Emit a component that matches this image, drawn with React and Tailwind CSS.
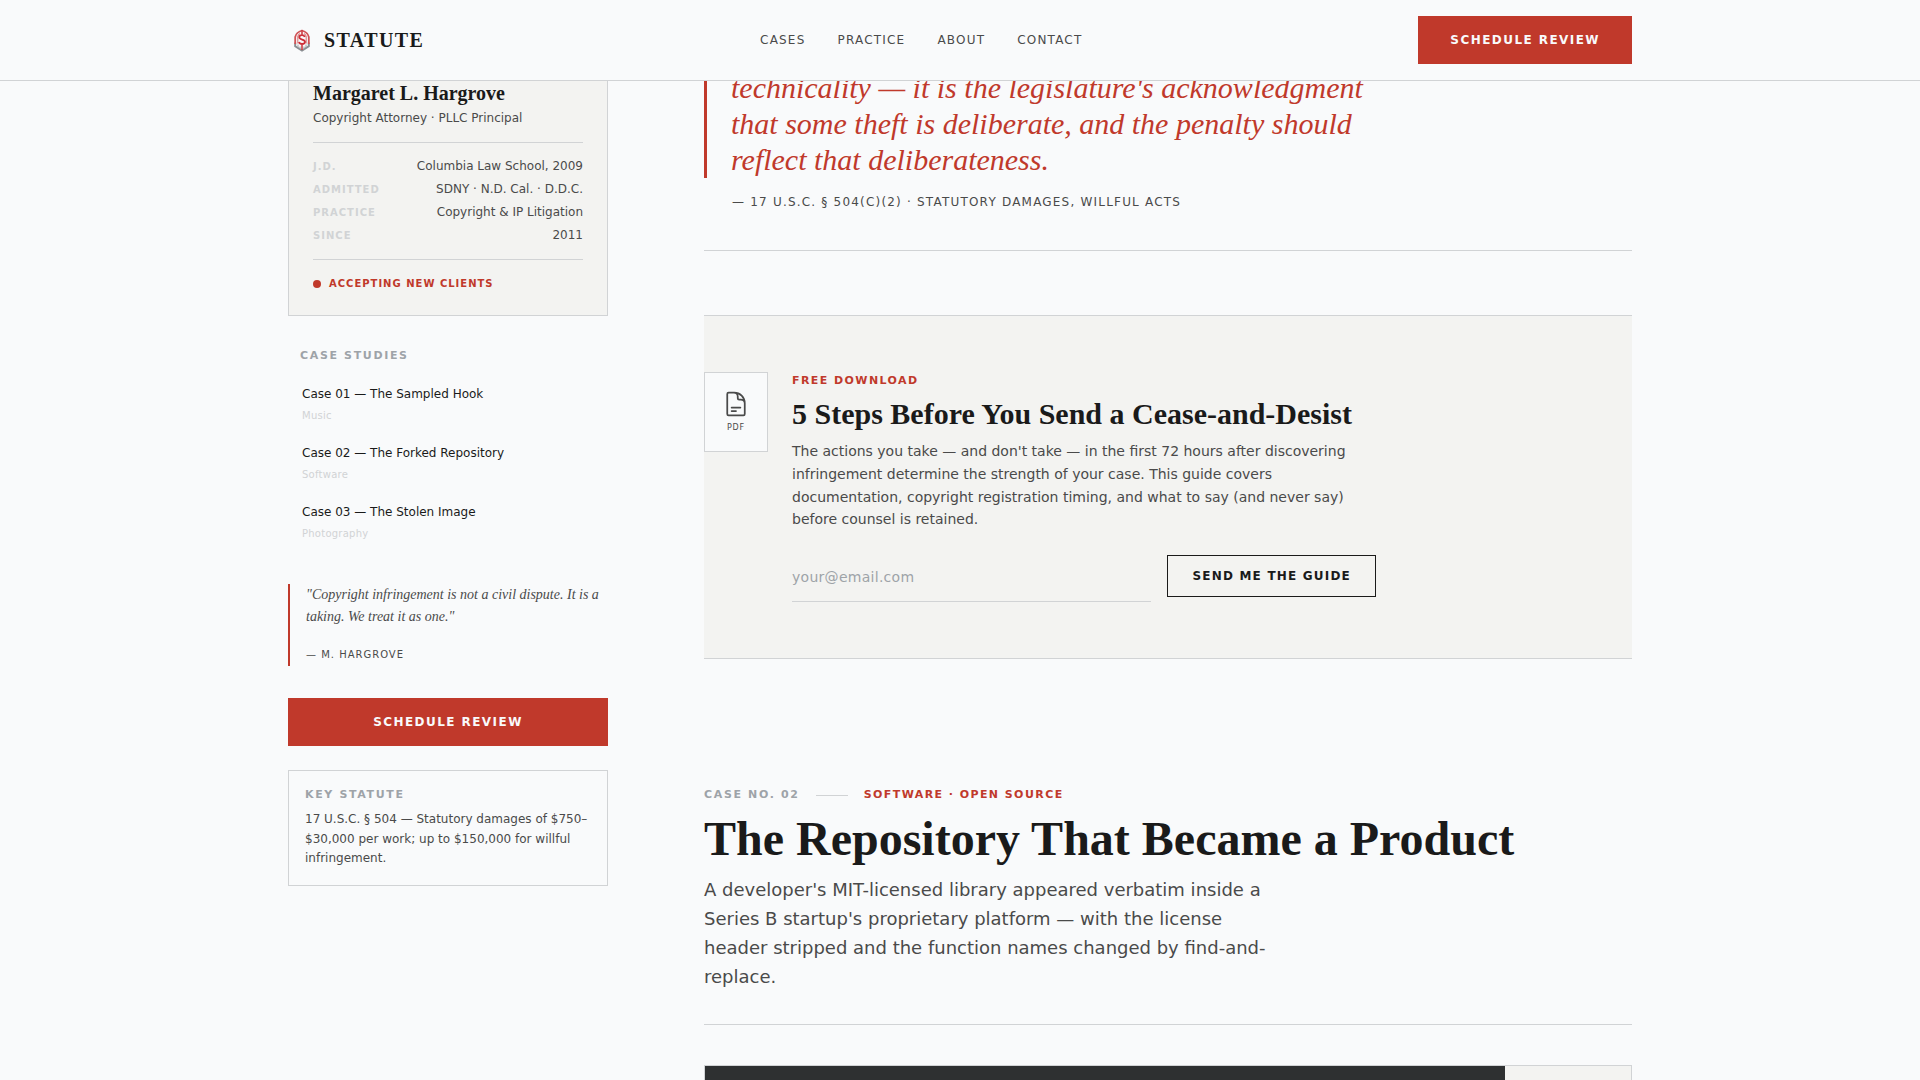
const credentials = [
  ['J.D.', 'Columbia Law School, 2009'],
  ['Admitted', 'SDNY · N.D. Cal. · D.D.C.'],
  ['Practice', 'Copyright & IP Litigation'],
  ['Since', '2011'],
];

const cases = [
  ['Case 01 — The Sampled Hook', 'Music'],
  ['Case 02 — The Forked Repository', 'Software'],
  ['Case 03 — The Stolen Image', 'Photography'],
];

const navLinks = ['Cases', 'Practice', 'About', 'Contact'];

function Logo() {
  return (
    <svg viewBox="0 0 28 28" className="size-7" fill="none" aria-hidden="true">
      <path d="M7.200 16.500v3.800l6.800 4.200 6.800-4.200v-3.800" stroke="#8a8d91" strokeWidth="2" />
      <path d="M10 18.500v3M18 18.500v3M12 20.500v3M16 20.500v3" stroke="#a2a4a7" strokeWidth="1" />
      <path d="M7.200 18v-7c.6-2.800 3-5.400 6.800-6.500 3.800 1.100 6.200 3.700 6.800 6.500v7" stroke="#d05356" strokeWidth="1.800" />
      <path d="M9.800 17.500v-7c.3-1.300 1-2.300 2.200-3M18.200 17.500v-7c-.3-1.300-1-2.300-2.200-3" stroke="#d98486" strokeWidth="1.200" />
      <path d="M16.800 11c-.5-1.300-1.500-1.900-2.800-1.900-1.600 0-2.700.8-2.700 2.100 0 2.900 5.700 1.800 5.700 4.600 0 1.400-1.200 2.200-2.900 2.200-1.500 0-2.700-.6-3.100-2" stroke="#cd2f38" strokeWidth="1.800" />
      <path d="M14 4v5.500M14 18v6" stroke="#cd3f46" strokeWidth="1.600" />
    </svg>
  );
}

function DocumentIcon() {
  return (
    <svg viewBox="0 0 24 24" className="size-7" fill="none" stroke="currentColor" strokeWidth="1.5" strokeLinecap="round" strokeLinejoin="round" aria-hidden="true">
      <path d="M19.5 14.25v-2.625a3.375 3.375 0 0 0-3.375-3.375h-1.5A1.125 1.125 0 0 1 13.5 7.125v-1.5a3.375 3.375 0 0 0-3.375-3.375H8.25m0 12.75h7.5m-7.5 3H12M10.5 2.25H5.625c-.621 0-1.125.504-1.125 1.125v17.25c0 .621.504 1.125 1.125 1.125h12.75c.621 0 1.125-.504 1.125-1.125V11.25a9 9 0 0 0-9-9Z" />
    </svg>
  );
}

function Header() {
  return (
    <header className="sticky top-0 z-10 border-b border-[#d1d3d5] bg-[#f9fafb]">
      <div className="mx-auto flex h-20 max-w-[1440px] items-center justify-between px-12">
        <a href="#top" className="flex items-center gap-2">
          <Logo />
          <span className="font-['Liberation_Serif',serif] text-xl font-bold tracking-[0.07em] text-[#1a1a1a]">STATUTE</span>
        </a>
        <nav aria-label="Primary" className="flex gap-8">
          {navLinks.map((label) => (
            <a key={label} href={`#${label.toLowerCase()}`} className="text-xs tracking-[0.1em] uppercase">
              {label}
            </a>
          ))}
        </nav>
        <button type="button" className="h-12 bg-[#c0392b] px-8 text-xs font-bold tracking-[0.12em] text-[#f9fafb] uppercase">
          Schedule Review
        </button>
      </div>
    </header>
  );
}

function Sidebar() {
  return (
    <aside className="w-80 shrink-0">
      <section className="border border-[#d1d3d5] bg-[#f3f3f1] px-6 pt-2 pb-6">
        <h2 className="font-['Liberation_Serif',serif] text-xl leading-7 font-bold text-[#1a1a1a]">Margaret L. Hargrove</h2>
        <p className="mt-px text-xs leading-5">Copyright Attorney · PLLC Principal</p>
        <dl className="mt-[14px] flex flex-col gap-1 border-y border-[#d1d3d5] py-[14px]">
          {credentials.map(([term, value]) => (
            <div key={term} className="flex items-center justify-between leading-[19px]">
              <dt className="text-[10px] font-bold tracking-[0.1em] text-[#d1d3d5] uppercase">{term}</dt>
              <dd className="text-xs leading-[19px]">{value}</dd>
            </div>
          ))}
        </dl>
        <p className="mt-4 flex items-center gap-2 text-[10px] leading-[15px] font-bold tracking-[0.1em] text-[#c0392b] uppercase">
          <span className="size-2 rounded-full bg-[#c0392b]" />
          Accepting new clients
        </p>
      </section>

      <nav aria-labelledby="case-studies" className="mt-8">
        <h3 id="case-studies" className="px-3 text-[11px] leading-4 font-bold tracking-[0.15em] text-[#9ea3a8] uppercase">Case studies</h3>
        <ul className="mt-[13px] flex flex-col gap-1">
          {cases.map(([title, field]) => (
            <li key={title}>
              <a href="#cases" className="block border-l-2 border-transparent px-3 py-2">
                <span className="block text-xs leading-[19px] text-[#1a1a1a]">{title}</span>
                <span className="mt-1 block text-[10px] leading-4 tracking-wide text-[#d1d3d5]">{field}</span>
              </a>
            </li>
          ))}
        </ul>
      </nav>

      <figure className="mt-[34px] border-l-2 border-[#c0392b] pb-px pl-4">
        <blockquote className="font-['Liberation_Serif',serif] text-sm leading-[22px] italic">
          "Copyright infringement is not a civil dispute. It is a taking. We treat it as one."
        </blockquote>
        <figcaption className="mt-[17px] text-[10px] leading-5 tracking-[0.1em] uppercase">— M. Hargrove</figcaption>
      </figure>

      <button type="button" className="mt-8 block h-12 w-full bg-[#c0392b] text-xs font-bold tracking-[0.12em] text-[#f9fafb] uppercase">
        Schedule Review
      </button>

      <section className="mt-6 border border-[#d1d3d5] p-4">
        <h3 className="mb-2 text-[11px] leading-[15px] font-bold tracking-[0.15em] text-[#9ea3a8] uppercase">Key statute</h3>
        <p className="text-xs leading-relaxed">
          17 U.S.C. § 504 — Statutory damages of $750–$30,000 per work; up to $150,000 for willful infringement.
        </p>
      </section>
    </aside>
  );
}

function GuideDownload() {
  return (
    <section className="mt-16 border-y border-[#d1d3d5] bg-[#f3f3f1] py-14">
      <div className="flex max-w-2xl items-start gap-6">
        <div className="flex h-20 w-16 shrink-0 flex-col items-center justify-center gap-1 border border-[#d1d3d5] bg-[#f9fafb]">
          <DocumentIcon />
          <span className="text-[8px] leading-3 tracking-[0.1em]">PDF</span>
        </div>
        <div className="min-w-0 flex-1">
          <p className="text-[11px] leading-[18px] font-bold tracking-[0.13em] text-[#c0392b] uppercase">Free download</p>
          <h2 className="mt-[6px] font-['Liberation_Serif',serif] text-3xl leading-9 font-bold text-[#1a1a1a]">
            5 Steps Before You Send a Cease-and-Desist
          </h2>
          <p className="mt-2 text-sm leading-relaxed">
            The actions you take — and don't take — in the first 72 hours after discovering infringement determine the
            strength of your case. This guide covers documentation, copyright registration timing, and what to say (and
            never say) before counsel is retained.
          </p>
          <form className="mt-[19px] flex items-center gap-4" onSubmit={(event) => event.preventDefault()}>
            <input
              type="email"
              aria-label="Email address"
              placeholder="your@email.com"
              className="min-w-0 flex-1 border-b border-[#d1d3d5] bg-transparent pt-[18px] pb-[14px] text-sm leading-[19px] tracking-[0.02em] outline-none placeholder:text-[#9ea3a8]"
            />
            <button type="submit" className="h-[42px] shrink-0 border border-[#1a1a1a] px-6 text-xs font-bold tracking-[0.1em] text-[#1a1a1a] uppercase">
              Send me the guide
            </button>
          </form>
        </div>
      </div>
    </section>
  );
}

function RepositoryCase() {
  return (
    <article className="mt-32">
      <header className="border-b border-[#d1d3d5] pb-[33px]">
        <p className="flex items-center gap-4 text-[11px] leading-4 font-bold uppercase">
          <span className="tracking-[0.15em] text-[#9ea3a8]">Case No. 02</span>
          <span className="h-px w-8 bg-[#d1d3d5]" />
          <span className="tracking-[0.13em] text-[#c0392b]">Software · Open Source</span>
        </p>
        <h2 className="mt-3 font-['Liberation_Serif',serif] text-5xl leading-none font-bold text-[#1a1a1a]">
          The Repository That Became a Product
        </h2>
        <p className="mt-3 max-w-xl text-lg leading-[29px]">
          A developer's MIT-licensed library appeared verbatim inside a Series B startup's proprietary platform — with
          the license header stripped and the function names changed by find-and-replace.
        </p>
      </header>
      <div className="mt-10 border border-[#d1d3d5] bg-[#f3f3f1]">
        <div className="h-[450px] max-w-[800px] bg-[#2e3031]" />
      </div>
    </article>
  );
}

export default function App() {
  return (
    <div id="top" className="min-h-screen bg-[#f9fafb] font-['DejaVu_Sans',sans-serif] text-[#4a4a4a]">
      <Header />
      <div className="mx-auto -mt-[11px] flex max-w-[1440px] items-start gap-24 px-12">
        <Sidebar />
        <main className="min-w-0 flex-1">
          <figure className="border-b border-[#d1d3d5] pb-9">
            <blockquote className="max-w-2xl border-l-3 border-[#c0392b] pl-6 font-['Liberation_Serif',serif] text-3xl leading-9 text-[#c0392b] italic">
              technicality — it is the legislature's acknowledgment that some theft is deliberate, and the penalty should
              reflect that deliberateness.
            </blockquote>
            <figcaption className="mt-3 pl-7 text-xs leading-6 tracking-[0.1em] uppercase">
              — 17 U.S.C. § 504(c)(2) · Statutory damages, willful acts
            </figcaption>
          </figure>
          <GuideDownload />
          <RepositoryCase />
        </main>
      </div>
    </div>
  );
}
